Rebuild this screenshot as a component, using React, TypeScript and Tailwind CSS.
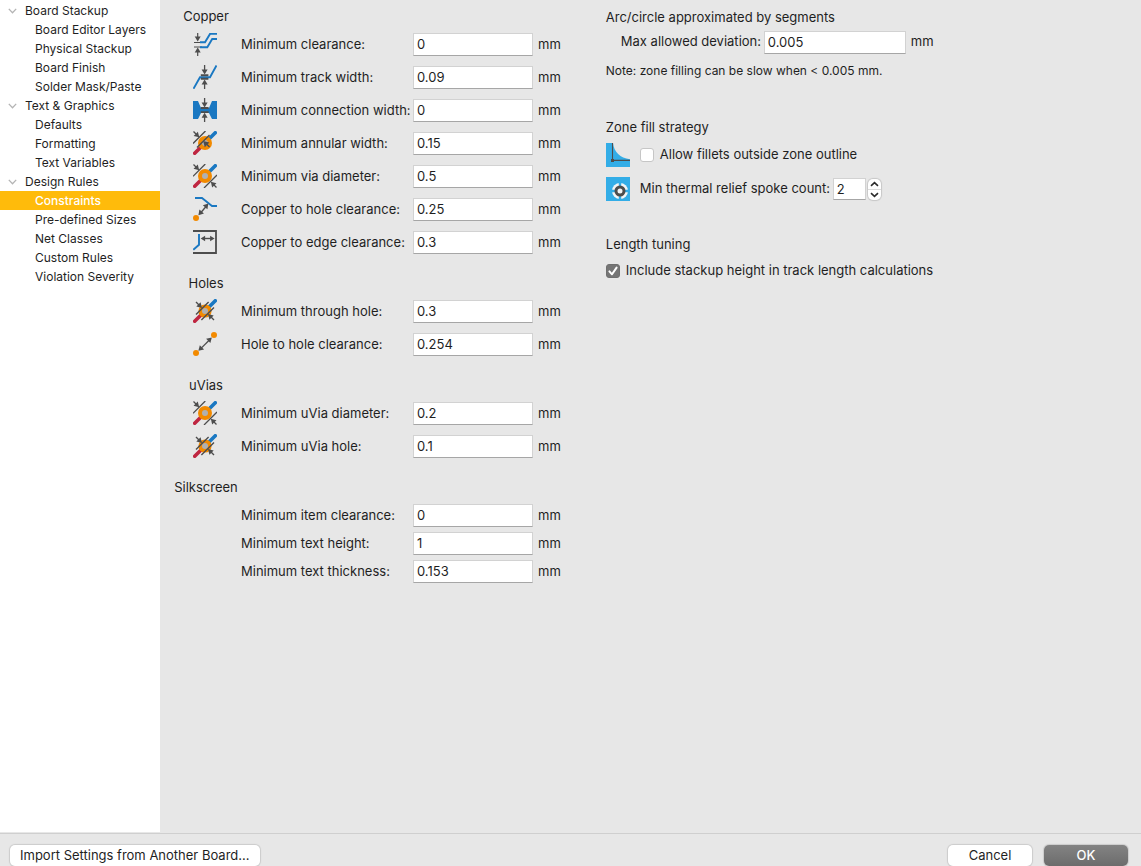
import { useId, useState, type ReactNode } from "react";

const BLUE = "#1a78c2";
const GRAY = "#4d4d4d";
const ORANGE = "#f28a00";
const RED = "#bf2641";

function Icon({ children }: { children: ReactNode }) {
  return (
    <svg width="24" height="24" viewBox="0 0 24 24" fill="none" aria-hidden="true" className="block shrink-0">
      {children}
    </svg>
  );
}

function ArrowHead({ x, y, angle, size = 5 }: { x: number; y: number; angle: number; size?: number }) {
  const half = size * 0.6;
  return (
    <path
      d={`M0 0 L${-half} ${-size} L${half} ${-size} Z`}
      fill={GRAY}
      transform={`translate(${x} ${y}) rotate(${angle})`}
    />
  );
}

function ClearanceIcon() {
  return (
    <Icon>
      <path d="M1 10.5H9M1 15H9" stroke={GRAY} strokeWidth="1" />
      <path d="M7 10.3H12L17 1.9H24M7 15.2H14.3L19.2 7H24" stroke={BLUE} strokeWidth="1.9" />
      <path d="M4.7 1V6M4.7 24V19" stroke={GRAY} strokeWidth="1.2" />
      <ArrowHead x={4.7} y={9.6} angle={0} />
      <ArrowHead x={4.7} y={15.6} angle={180} />
    </Icon>
  );
}

function TrackWidthIcon() {
  return (
    <Icon>
      <path d="M0.5 23.7L7 12.2H17L23.5 0.5" stroke={BLUE} strokeWidth="1.9" />
      <path d="M7.8 10.2H15.4M7.8 13.8H15.4" stroke={GRAY} strokeWidth="2" />
      <path d="M11.6 0V5M11.6 24V19" stroke={GRAY} strokeWidth="1.3" />
      <ArrowHead x={11.6} y={9.6} angle={0} />
      <ArrowHead x={11.6} y={14.4} angle={180} />
    </Icon>
  );
}

function ConnectionWidthIcon() {
  return (
    <Icon>
      <path d="M0 3H5L8 10H16L19 3H24V21H19L16 15H8L5 21H0Z" fill={BLUE} />
      <path d="M7.8 10H15.6M7.8 14.2H15.6" stroke={GRAY} strokeWidth="1.8" />
      <path d="M11.6 0V5M11.6 24V19" stroke={GRAY} strokeWidth="1.3" />
      <ArrowHead x={11.6} y={9.4} angle={0} />
      <ArrowHead x={11.6} y={14.8} angle={180} />
    </Icon>
  );
}

function ViaBase({ radius = 7 }: { radius?: number }) {
  return (
    <>
      <path d="M15 9L22.3 1.7" stroke={BLUE} strokeWidth="3.6" strokeLinecap="round" />
      <path d="M9 15L1.7 22.3" stroke={RED} strokeWidth="3.6" strokeLinecap="round" />
      <circle cx="12" cy="12" r={radius} fill={ORANGE} />
      <circle cx="12" cy="12" r="3" fill="#b0b0b0" />
    </>
  );
}

function AnnularWidthIcon() {
  return (
    <Icon>
      <ViaBase />
      <path d="M0 12.5L12.5 0M4 16.5L16.5 4M0.5 0.5L3 3M16.5 16L13 12.5" stroke={GRAY} strokeWidth="1.4" />
      <ArrowHead x={6.3} y={6.3} angle={-45} />
      <ArrowHead x={10.2} y={10} angle={135} size={5.5} />
    </Icon>
  );
}

function ViaDiameterIcon() {
  return (
    <Icon>
      <ViaBase />
      <path d="M0 12.3L12.3 0M11 24L24 11M0.5 0.5L3 3M23.5 23.5L21 21" stroke={GRAY} strokeWidth="1.3" />
      <ArrowHead x={6.2} y={6.2} angle={-45} />
      <ArrowHead x={17.8} y={17.8} angle={135} />
    </Icon>
  );
}

function ViaHoleIcon() {
  return (
    <Icon>
      <ViaBase radius={6.6} />
      <path d="M3 15.6L15.6 3M8.4 21L21 8.4M3 3L6 6M21 21L18 18" stroke={GRAY} strokeWidth="1.4" />
      <ArrowHead x={9} y={9} angle={-45} />
      <ArrowHead x={15} y={15} angle={135} />
    </Icon>
  );
}

function CopperToHoleIcon() {
  return (
    <Icon>
      <path d="M2 1H9L19 9H24" stroke={BLUE} strokeWidth="1.8" />
      <path d="M8 15.5L13 9.5" stroke={GRAY} strokeWidth="1.3" />
      <ArrowHead x={15.4} y={6.4} angle={-139} />
      <ArrowHead x={5.4} y={18.3} angle={41} />
      <circle cx="3" cy="21" r="3" fill={ORANGE} />
    </Icon>
  );
}

function CopperToEdgeIcon() {
  return (
    <Icon>
      <path d="M0 1H23V23H0" stroke={GRAY} strokeWidth="1.8" />
      <path d="M6 4V14.8L0.3 19.8" stroke={BLUE} strokeWidth="1.9" />
      <path d="M11 8.5H18" stroke={GRAY} strokeWidth="1.4" />
      <ArrowHead x={7.6} y={8.5} angle={90} size={4.5} />
      <ArrowHead x={21.6} y={8.5} angle={-90} size={4.5} />
    </Icon>
  );
}

function HoleToHoleIcon() {
  return (
    <Icon>
      <path d="M8 16.4L16.4 8" stroke={GRAY} strokeWidth="1.3" />
      <ArrowHead x={18.8} y={5.4} angle={-135} />
      <ArrowHead x={5.4} y={18.8} angle={45} />
      <circle cx="21" cy="3" r="3" fill={ORANGE} />
      <circle cx="3" cy="21" r="3" fill={ORANGE} />
    </Icon>
  );
}

function FilletIcon() {
  return (
    <Icon>
      <path d="M0 0H24V24H0Z" fill="#33ade7" />
      <path d="M7 0H24V16.3C14 15 8 9 7 0Z" fill="#e7e7e7" />
      <path d="M6.5 0V17.4H24" stroke={GRAY} strokeWidth="1.1" />
      <path d="M5 16H8V19H5Z" fill={GRAY} />
    </Icon>
  );
}

function ThermalIcon() {
  return (
    <Icon>
      <path d="M0 0H24V24H0Z" fill="#33ade7" />
      <circle cx="14" cy="14" r="8" fill="#f4f4f4" />
      <path d="M14 5.5V22.5M5.5 14H22.5" stroke="#33ade7" strokeWidth="2.4" />
      <circle cx="14" cy="14" r="4" fill="#f4f4f4" stroke={GRAY} strokeWidth="3" />
    </Icon>
  );
}

const fieldClass =
  "border border-[#d2d2d2] border-b-[#a6a6a6] bg-white px-[3px] pb-px text-[13px] text-[#1f1f1f] outline-none";

type Row = { label: string; value: string; icon?: ReactNode };

function ConstraintRow({ label, value, icon }: Row) {
  const id = useId();
  const textClass = icon ? "" : "pt-px";
  return (
    <div
      className={`grid grid-cols-[62px_167px_120px_auto] items-center gap-x-[5px] ${icon ? "h-[33px]" : "h-7"}`}
    >
      <div className="flex justify-center pb-px">{icon}</div>
      <label htmlFor={id} className={`whitespace-nowrap ${textClass}`}>
        {label}
      </label>
      <input id={id} defaultValue={value} className={`h-[23px] w-full ${fieldClass}`} />
      <span className={textClass}>mm</span>
    </div>
  );
}

function Group({ title, rows, roomy }: { title: string; rows: Row[]; roomy?: boolean }) {
  return (
    <section>
      <h2 className={`w-16 text-center leading-5 ${roomy ? "mb-1" : "mb-0.5"}`}>{title}</h2>
      {rows.map((row) => (
        <ConstraintRow key={row.label} {...row} />
      ))}
    </section>
  );
}

const copper: Row[] = [
  { label: "Minimum clearance:", value: "0", icon: <ClearanceIcon /> },
  { label: "Minimum track width:", value: "0.09", icon: <TrackWidthIcon /> },
  { label: "Minimum connection width:", value: "0", icon: <ConnectionWidthIcon /> },
  { label: "Minimum annular width:", value: "0.15", icon: <AnnularWidthIcon /> },
  { label: "Minimum via diameter:", value: "0.5", icon: <ViaDiameterIcon /> },
  { label: "Copper to hole clearance:", value: "0.25", icon: <CopperToHoleIcon /> },
  { label: "Copper to edge clearance:", value: "0.3", icon: <CopperToEdgeIcon /> },
];

const holes: Row[] = [
  { label: "Minimum through hole:", value: "0.3", icon: <ViaHoleIcon /> },
  { label: "Hole to hole clearance:", value: "0.254", icon: <HoleToHoleIcon /> },
];

const microVias: Row[] = [
  { label: "Minimum uVia diameter:", value: "0.2", icon: <ViaDiameterIcon /> },
  { label: "Minimum uVia hole:", value: "0.1", icon: <ViaHoleIcon /> },
];

const silkscreen: Row[] = [
  { label: "Minimum item clearance:", value: "0" },
  { label: "Minimum text height:", value: "1" },
  { label: "Minimum text thickness:", value: "0.153" },
];

const tree = [
  { title: "Board Stackup", pages: ["Board Editor Layers", "Physical Stackup", "Board Finish", "Solder Mask/Paste"] },
  { title: "Text & Graphics", pages: ["Defaults", "Formatting", "Text Variables"] },
  {
    title: "Design Rules",
    pages: ["Constraints", "Pre-defined Sizes", "Net Classes", "Custom Rules", "Violation Severity"],
  },
];

function Sidebar() {
  const [current, setCurrent] = useState("Constraints");
  const [closed, setClosed] = useState<string[]>([]);
  const toggle = (title: string) =>
    setClosed((list) => (list.includes(title) ? list.filter((t) => t !== title) : [...list, title]));

  return (
    <nav className="w-40 shrink-0 bg-white pt-px text-[12px] leading-[19px]">
      {tree.map(({ title, pages }) => (
        <div key={title}>
          <button
            type="button"
            onClick={() => toggle(title)}
            aria-expanded={!closed.includes(title)}
            className="flex h-[19px] w-full items-center gap-2 pl-2 text-left"
          >
            <svg width="9" height="6" viewBox="0 0 9 6" fill="none" aria-hidden="true">
              <path d="M0.8 0.9L4.5 4.8L8.2 0.9" stroke="#b4b4b4" strokeWidth="1.3" />
            </svg>
            {title}
          </button>
          {!closed.includes(title) &&
            pages.map((page) => (
              <button
                key={page}
                type="button"
                onClick={() => setCurrent(page)}
                className={`block h-[19px] w-full whitespace-nowrap pl-[35px] text-left ${
                  page === current ? "bg-[#ffbb0b] font-medium text-white" : ""
                }`}
              >
                {page}
              </button>
            ))}
        </div>
      ))}
    </nav>
  );
}

function CheckBox({ label, initial }: { label: string; initial: boolean }) {
  const [checked, setChecked] = useState(initial);
  return (
    <label className="flex items-center gap-1.5">
      <span className="grid size-3.5 place-items-center">
        <input
          type="checkbox"
          checked={checked}
          onChange={(e) => setChecked(e.target.checked)}
          className="col-start-1 row-start-1 size-3.5 appearance-none rounded-[3px] border border-[#c6c6c6] bg-white checked:border-[#6f6f6f] checked:bg-[#757575]"
        />
        {checked && (
          <svg
            width="14"
            height="14"
            viewBox="0 0 14 14"
            fill="none"
            aria-hidden="true"
            className="pointer-events-none col-start-1 row-start-1"
          >
            <path d="M3.4 7.4L6 10.3L10.6 3.6" stroke="white" strokeWidth="2" strokeLinecap="round" strokeLinejoin="round" />
          </svg>
        )}
      </span>
      <span>{label}</span>
    </label>
  );
}

function SpokeCount() {
  const [count, setCount] = useState(2);
  return (
    <div className="flex items-center gap-[5px]">
      <label htmlFor="spokes" className="w-[188px]">
        Min thermal relief spoke count:
      </label>
      <div className="flex items-center gap-0.5">
        <input
          id="spokes"
          value={count}
          onChange={(e) => setCount(Number(e.target.value) || 0)}
          className={`h-[22px] w-[33px] ${fieldClass}`}
        />
        <div className="flex h-[21px] w-[13px] flex-col divide-y divide-[#dcdcdc] rounded-[5px] bg-white shadow-[0_0_1px_1px_rgba(0,0,0,0.14)]">
          <button
            type="button"
            aria-label="Increase"
            onClick={() => setCount(count + 1)}
            className="flex flex-1 items-center justify-center"
          >
            <svg width="9" height="6" viewBox="0 0 9 6" fill="none" aria-hidden="true">
              <path d="M1 4.8L4.5 1.6L8 4.8" stroke="#2b2b2b" strokeWidth="1.6" />
            </svg>
          </button>
          <button
            type="button"
            aria-label="Decrease"
            onClick={() => setCount(Math.max(0, count - 1))}
            className="flex flex-1 items-center justify-center"
          >
            <svg width="9" height="6" viewBox="0 0 9 6" fill="none" aria-hidden="true">
              <path d="M1 1.2L4.5 4.4L8 1.2" stroke="#2b2b2b" strokeWidth="1.6" />
            </svg>
          </button>
        </div>
      </div>
    </div>
  );
}

function Options() {
  return (
    <div className="flex flex-col whitespace-nowrap pt-[7px]">
      <section>
        <h2 className="leading-5">Arc/circle approximated by segments</h2>
        <div className="flex h-[30px] items-center gap-[5px] pl-[15px]">
          <label htmlFor="deviation" className="w-[138px]">
            Max allowed deviation:
          </label>
          <input id="deviation" defaultValue="0.005" className={`h-[23px] w-[142px] ${fieldClass}`} />
          <span>mm</span>
        </div>
        <p className="mt-1 text-[12px] leading-5">Note: zone filling can be slow when &lt; 0.005 mm.</p>
      </section>
      <section className="mt-9">
        <h2 className="mb-px leading-5">Zone fill strategy</h2>
        <div className="flex h-[34px] items-center gap-2.5">
          <FilletIcon />
          <CheckBox label="Allow fillets outside zone outline" initial={false} />
        </div>
        <div className="flex h-[34px] items-center gap-2.5">
          <ThermalIcon />
          <SpokeCount />
        </div>
      </section>
      <section className="mt-7">
        <h2 className="mb-[7px] leading-5">Length tuning</h2>
        <CheckBox label="Include stackup height in track length calculations" initial />
      </section>
    </div>
  );
}

const buttonClass = "h-[21px] rounded-[5px] pb-px text-[13px] leading-5 shadow-[0_0_1px_1px_rgba(0,0,0,0.12)]";

export default function App() {
  return (
    <div className="flex min-h-screen flex-col bg-[#e7e7e7] font-['Inter',sans-serif] text-[13px] text-[#1f1f1f]">
      <div className="flex flex-1 pb-px">
        <Sidebar />
        <main className="flex flex-1 gap-[45px] pl-3.5">
          <div className="flex flex-col gap-3.5 pt-1.5">
            <Group title="Copper" rows={copper} />
            <Group title="Holes" rows={holes} />
            <Group title="uVias" rows={microVias} />
            <Group title="Silkscreen" rows={silkscreen} roomy />
          </div>
          <Options />
        </main>
      </div>
      <footer className="flex h-[33px] items-start gap-3 border-t border-[#cfcfcf] pl-2.5 pr-[13px] pt-[11px]">
        <button type="button" className={`mr-auto bg-white px-2.5 ${buttonClass}`}>
          Import Settings from Another Board...
        </button>
        <button type="button" className={`w-[84px] bg-white ${buttonClass}`}>
          Cancel
        </button>
        <button
          type="button"
          className={`w-[84px] bg-linear-to-b from-[#838383] to-[#6c6c6c] font-medium text-white ${buttonClass}`}
        >
          OK
        </button>
      </footer>
    </div>
  );
}
